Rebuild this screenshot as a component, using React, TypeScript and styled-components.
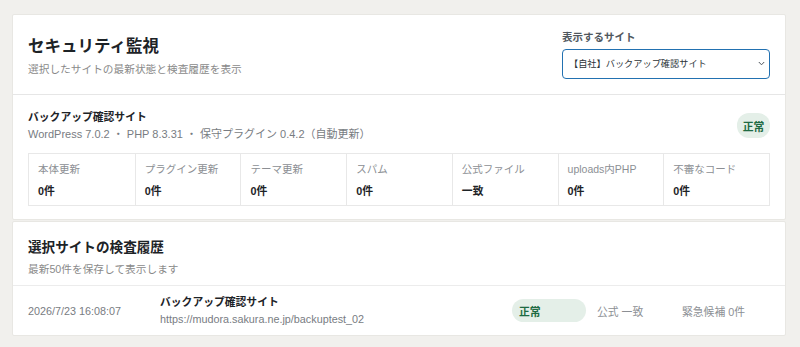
import React from 'react'
import styled, { createGlobalStyle } from 'styled-components'

const GlobalStyle = createGlobalStyle`
  body {
    margin: 0;
    background: #f1f0ed;
    font-family: "Liberation Sans", "Noto Sans CJK JP", sans-serif;
    color: #1d2327;
  }
`

const Page = styled.div`
  display: flex;
  flex-direction: column;
  gap: 1px;
  padding: 14px 14px 13px 12px;
`

const Card = styled.div`
  background: #fff;
  border: 1px solid #e8e7e3;
  border-radius: 2px;
`

const Header = styled.section`
  display: flex;
  justify-content: space-between;
  align-items: flex-start;
  padding: 15px 15px 15px 15px;
  border-bottom: 1px solid #e6e6e6;
`

const TitleBlock = styled.div`
  padding-top: 6px;
`

const PageTitle = styled.h1`
  margin: 0;
  font-size: 16.5px;
  font-weight: 700;
  line-height: 20px;
  color: #1d2327;
`

const Subtitle = styled.p<{ $gap?: number }>`
  margin: ${({ $gap }) => $gap ?? 6}px 0 0;
  font-size: 10.7px;
  line-height: 14px;
  color: #8a8a8a;
`

const Picker = styled.div`
  display: flex;
  flex-direction: column;
  width: 208px;
`

const PickerLabel = styled.label`
  font-size: 10.5px;
  font-weight: 700;
  line-height: 14px;
  color: #50575e;
  margin-bottom: 5px;
`

const SelectWrap = styled.div`
  position: relative;
`

const Select = styled.select`
  appearance: none;
  width: 100%;
  height: 30px;
  box-sizing: border-box;
  padding: 0 20px 0 6px;
  border: 1.5px solid #2271b1;
  border-radius: 4px;
  background: #fff;
  font-family: inherit;
  font-size: 9.2px;
  color: #2c3338;
  outline: none;
`

const Chevron = styled.svg`
  position: absolute;
  right: 5px;
  top: 12px;
  width: 7px;
  height: 5px;
  pointer-events: none;
`

const SiteSection = styled.section`
  padding: 15px 15px 13px 15px;
`

const SiteHead = styled.div`
  display: flex;
  justify-content: space-between;
  align-items: center;
`

const SiteName = styled.div<{ $size?: number }>`
  font-size: ${({ $size }) => $size ?? 10.8}px;
  font-weight: 700;
  line-height: 14px;
  color: #1d2327;
`

const Meta = styled.div`
  margin-top: 3px;
  font-size: 11px;
  line-height: 14px;
  color: #787c82;
`

const Badge = styled.span<{ $wide?: boolean }>`
  display: inline-flex;
  align-items: center;
  justify-content: ${({ $wide }) => ($wide ? 'flex-start' : 'center')};
  box-sizing: border-box;
  width: ${({ $wide }) => ($wide ? '74px' : '33px')};
  height: ${({ $wide }) => ($wide ? '23px' : '25px')};
  padding: ${({ $wide }) => ($wide ? '0 7px' : '0')};
  border-radius: 12px;
  background: #e4efe8;
  color: #1e6b43;
  font-size: 10.8px;
  font-weight: 700;
`

const StatGrid = styled.div`
  display: grid;
  grid-template-columns: repeat(7, 1fr);
  margin-top: 12px;
  border: 1px solid #e8e8e8;
`

const Stat = styled.div`
  padding: 8px 9px 7px;
  border-left: 1px solid #e8e8e8;

  &:first-child {
    border-left: none;
  }
`

const StatLabel = styled.div`
  font-size: 10.5px;
  line-height: 14px;
  color: #8c8f94;
`

const StatValue = styled.div`
  margin-top: 8px;
  font-size: 10.8px;
  font-weight: 700;
  line-height: 14px;
  color: #1d2327;
`

const HistoryHead = styled.section`
  padding: 17px 15px 9px;
  border-bottom: 1px solid #ececec;
`

const HistoryTitle = styled.h2`
  margin: 0;
  font-size: 13.6px;
  font-weight: 700;
  line-height: 18px;
  color: #1d2327;
`

const Row = styled.div`
  display: flex;
  align-items: center;
  height: 49px;
  padding: 0 15px;
`

const DateCell = styled.div`
  width: 132px;
  font-size: 10.8px;
  color: #787c82;
`

const SiteCell = styled.div`
  flex: 1;
`

const Url = styled.div`
  margin-top: 3px;
  font-size: 10.8px;
  line-height: 14px;
  color: #787c82;
`

const InfoCell = styled.div<{ $width: number }>`
  width: ${({ $width }) => $width}px;
  font-size: 10.8px;
  color: #8c8f94;
`

const stats = [
  { label: '本体更新', value: '0件' },
  { label: 'プラグイン更新', value: '0件' },
  { label: 'テーマ更新', value: '0件' },
  { label: 'スパム', value: '0件' },
  { label: '公式ファイル', value: '一致' },
  { label: 'uploads内PHP', value: '0件' },
  { label: '不審なコード', value: '0件' },
]

const App = () => {
  return (
    <>
      <GlobalStyle />
      <Page>
        <Card>
          <Header>
            <TitleBlock>
              <PageTitle>セキュリティ監視</PageTitle>
              <Subtitle>選択したサイトの最新状態と検査履歴を表示</Subtitle>
            </TitleBlock>
            <Picker>
              <PickerLabel htmlFor="site">表示するサイト</PickerLabel>
              <SelectWrap>
                <Select id="site" defaultValue="self">
                  <option value="self">【自社】バックアップ確認サイト</option>
                </Select>
                <Chevron viewBox="0 0 7 5">
                  <path d="M0.8 1 L3.5 3.8 L6.2 1" fill="none" stroke="#50575e" strokeWidth="1" />
                </Chevron>
              </SelectWrap>
            </Picker>
          </Header>
          <SiteSection>
            <SiteHead>
              <div>
                <SiteName>バックアップ確認サイト</SiteName>
                <Meta>WordPress 7.0.2 ・ PHP 8.3.31 ・ 保守プラグイン 0.4.2（自動更新）</Meta>
              </div>
              <Badge>正常</Badge>
            </SiteHead>
            <StatGrid>
              {stats.map((s) => (
                <Stat key={s.label}>
                  <StatLabel>{s.label}</StatLabel>
                  <StatValue>{s.value}</StatValue>
                </Stat>
              ))}
            </StatGrid>
          </SiteSection>
        </Card>
        <Card>
          <HistoryHead>
            <HistoryTitle>選択サイトの検査履歴</HistoryTitle>
            <Subtitle $gap={5}>最新50件を保存して表示します</Subtitle>
          </HistoryHead>
          <Row>
            <DateCell>2026/7/23 16:08:07</DateCell>
            <SiteCell>
              <SiteName>バックアップ確認サイト</SiteName>
              <Url>https://mudora.sakura.ne.jp/backuptest_02</Url>
            </SiteCell>
            <Badge $wide>正常</Badge>
            <InfoCell $width={85} style={{ marginLeft: 11 }}>公式 一致</InfoCell>
            <InfoCell $width={88}>緊急候補 0件</InfoCell>
          </Row>
        </Card>
      </Page>
    </>
  )
}

export default App
